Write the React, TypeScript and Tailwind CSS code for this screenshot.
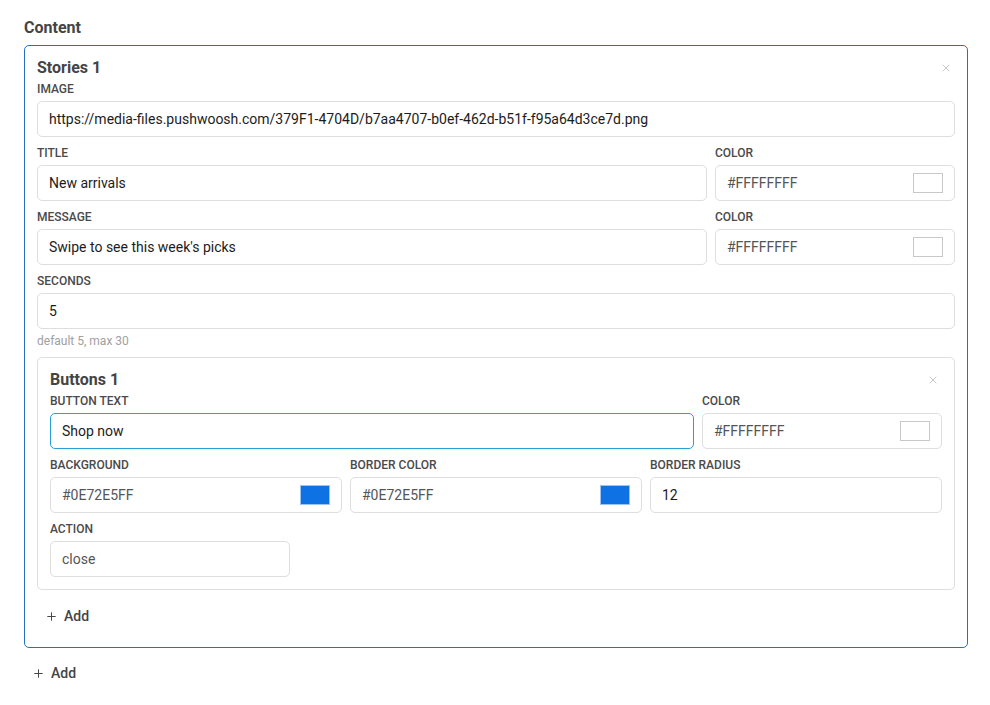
import { Plus, X } from 'lucide-react';

function Label({ children }: { children: React.ReactNode }) {
  return <div className="h-4 mb-[5px] text-[12px] leading-[18px] font-medium uppercase text-[#4a4a4a]">{children}</div>;
}

function TextField({ label, value, focused, muted }: { label: string; value: string; focused?: boolean; muted?: boolean }) {
  return (
    <div className="flex-1 min-w-0">
      <Label>{label}</Label>
      <div
        className={`h-9 flex items-center px-[11px] rounded-[5px] border bg-white text-[14px] ${
          focused ? 'border-[#2a9fd6]' : 'border-[#dedede]'
        } ${muted ? 'text-[#555]' : 'text-[#1c1c1c]'}`}
      >
        {value}
      </div>
    </div>
  );
}

function ColorField({ label, value, swatch, width }: { label: string; value: string; swatch: string; width?: string }) {
  const white = swatch === '#FFFFFF';
  return (
    <div className={width ?? 'flex-1 min-w-0'}>
      <Label>{label}</Label>
      <div className="h-9 flex items-center justify-between pl-[11px] pr-[11px] rounded-[5px] border border-[#dedede] bg-white text-[14px] text-[#555]">
        <span>{value}</span>
        <span
          className={`w-[30px] h-5 border ${white ? 'bg-white border-[#c8c8c8]' : 'bg-[#0E72E5] border-[#9cc4f0]'}`}
        />
      </div>
    </div>
  );
}

function AddButton() {
  return (
    <button className="h-9 flex items-center gap-[6px] px-2 text-[14px] font-medium text-[#444]">
      <Plus className="w-[13px] h-[13px]" strokeWidth={1.8} />
      Add
    </button>
  );
}

export default function App() {
  return (
    <div className="min-h-[705px] bg-white pt-[18px] px-6 font-['Roboto',sans-serif]">
      <h2 className="text-[16px] leading-5 font-bold text-[#444] mb-[7px]">Content</h2>

      <div className="w-[944px] rounded-[5px] border border-[#2571bd] pt-[12px] px-3 pb-[13px]">
        <div className="flex items-center justify-between h-5 mb-[2px]">
          <h3 className="text-[16px] font-bold text-[#444]">Stories 1</h3>
          <X className="w-[12px] h-[12px] text-[#b5b5b5] mr-[3px]" strokeWidth={1.5} />
        </div>

        <div className="flex flex-col gap-[7px]">
          <TextField label="Image" value="https://media-files.pushwoosh.com/379F1-4704D/b7aa4707-b0ef-462d-b51f-f95a64d3ce7d.png" />
          <div className="flex gap-2">
            <TextField label="Title" value="New arrivals" />
            <ColorField label="Color" value="#FFFFFFFF" swatch="#FFFFFF" width="w-[240px]" />
          </div>
          <div className="flex gap-2">
            <TextField label="Message" value="Swipe to see this week's picks" />
            <ColorField label="Color" value="#FFFFFFFF" swatch="#FFFFFF" width="w-[240px]" />
          </div>
          <div>
            <TextField label="Seconds" value="5" />
            <div className="mt-[4px] text-[12px] leading-4 text-[#a0a0a0]">default 5, max 30</div>
          </div>
        </div>

        <div className="mt-[8px] rounded-[5px] border border-[#dedede] pt-[12px] px-3 pb-3">
          <div className="flex items-center justify-between h-5 mb-[2px]">
            <h3 className="text-[16px] font-bold text-[#444]">Buttons 1</h3>
            <X className="w-[12px] h-[12px] text-[#b5b5b5] mr-[3px]" strokeWidth={1.5} />
          </div>
          <div className="flex flex-col gap-[7px]">
            <div className="flex gap-2">
              <TextField label="Button text" value="Shop now" focused />
              <ColorField label="Color" value="#FFFFFFFF" swatch="#FFFFFF" width="w-[240px]" />
            </div>
            <div className="flex gap-2">
              <ColorField label="Background" value="#0E72E5FF" swatch="#0E72E5" />
              <ColorField label="Border color" value="#0E72E5FF" swatch="#0E72E5" />
              <TextField label="Border radius" value="12" />
            </div>
            <div className="w-[240px]">
              <TextField label="Action" value="close" muted />
            </div>
          </div>
        </div>

        <div className="mt-[8px]">
          <AddButton />
        </div>
      </div>

      <div className="mt-[7px]">
        <AddButton />
      </div>
    </div>
  );
}
